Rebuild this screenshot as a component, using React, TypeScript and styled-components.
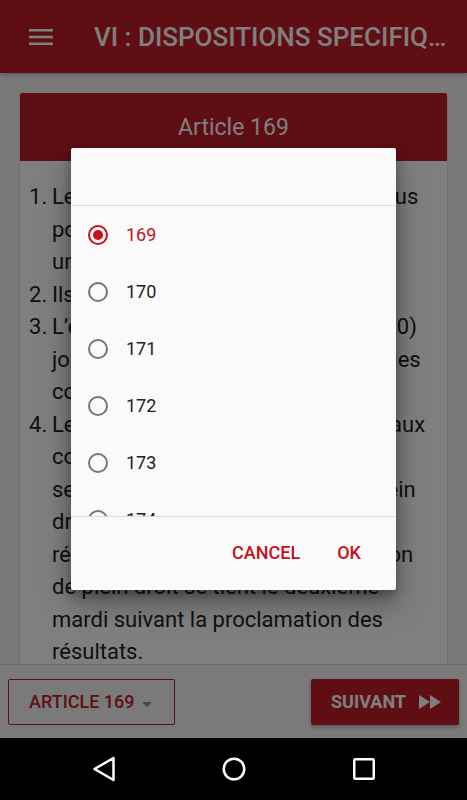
import React from "react";
import styled, {createGlobalStyle} from "styled-components";

const RED = "#be1c26";
const ACCENT = "#c8101a";

const articles = [169, 170, 171, 172, 173, 174, 175];

// corps de l'article, découpé ligne par ligne comme à l'écran
const paragraphs: string[][] = [
  [
    "Les députés de l’Assemblée sont élus",
    "pour cinq (5) ans au suffrage",
    "universel direct.",
  ],
  ["Ils sont rééligibles."],
  [
    "L’élection se tient au moins vingt (20)",
    "jours avant la fin des mandats que les",
    "conseillers en exercice.",
  ],
  [
    "Les résultats officiels des scrutins aux",
    "contestations électorales sont",
    "seconde session se réunit ici de plein",
    "droit à la date fixée par les",
    "résultats officiels du vote. La session",
    "de plein droit se tient le deuxième",
    "mardi suivant la proclamation des",
    "résultats.",
  ],
];

function App() {
  const selected = 169;
  return (
    <>
      <GlobalStyle />
      <Screen>
        <Main>
          <AppBar>
            <MenuIcon width="24" height="18" viewBox="0 0 24 18">
              <rect x="0" y="1" width="24" height="2.5" fill="#fff" />
              <rect x="0" y="7.75" width="24" height="2.5" fill="#fff" />
              <rect x="0" y="14.5" width="24" height="2.5" fill="#fff" />
            </MenuIcon>
            <Title>VI : DISPOSITIONS SPECIFIQUES AUX COLLECTIVITES</Title>
          </AppBar>
          <Content>
            <Card>
              <CardHeader>Article 169</CardHeader>
              <CardBody>
                {paragraphs.map((lines, i) => (
                  <Item key={i}>
                    <Num>{i + 1}.</Num>
                    <span>
                      {lines.map((line, j) => (
                        <React.Fragment key={j}>
                          {line}
                          {j < lines.length - 1 && <br />}
                        </React.Fragment>
                      ))}
                    </span>
                  </Item>
                ))}
              </CardBody>
            </Card>
          </Content>
          <BottomBar>
            <OutlineButton>
              ARTICLE 169
              <Caret />
            </OutlineButton>
            <NextButton>
              SUIVANT
              <svg width="22" height="14" viewBox="0 0 22 14">
                <path d="M0 0 L11 7 L0 14 Z M11 0 L22 7 L11 14 Z" fill="#fff" />
              </svg>
            </NextButton>
          </BottomBar>

          <Scrim>
            <Dialog>
              <DialogTitle />
              <OptionList>
                {articles.map((n) => (
                  <Option key={n}>
                    <Radio $checked={n === selected} />
                    <OptionLabel $checked={n === selected}>{n}</OptionLabel>
                  </Option>
                ))}
              </OptionList>
              <DialogActions>
                <TextButton>CANCEL</TextButton>
                <TextButton>OK</TextButton>
              </DialogActions>
            </Dialog>
          </Scrim>
        </Main>
        <NavBar>
          <NavSlot>
            <svg width="24" height="26" viewBox="0 0 24 26">
              <path
                d="M21.5 2 L2.5 13 L21.5 24 Z"
                fill="none"
                stroke="#fff"
                strokeWidth="2.5"
                strokeLinejoin="round"
              />
            </svg>
          </NavSlot>
          <NavSlot>
            <svg width="26" height="26" viewBox="0 0 26 26">
              <circle cx="13" cy="13" r="10.3" fill="none" stroke="#fff" strokeWidth="2.5" />
            </svg>
          </NavSlot>
          <NavSlot>
            <svg width="24" height="24" viewBox="0 0 24 24">
              <rect x="2.25" y="2.25" width="19.5" height="19.5" rx="1" fill="none" stroke="#fff" strokeWidth="2.5" />
            </svg>
          </NavSlot>
        </NavBar>
      </Screen>
    </>
  );
}

const GlobalStyle = createGlobalStyle`
  * {
    box-sizing: border-box;
  }
  html, body {
    margin: 0;
    padding: 0;
    background: #000;
  }
  body {
    font-family: Roboto, "Noto Sans", "Liberation Sans", sans-serif;
  }
`;
const Screen = styled.div`
  width: 467px;
  height: 800px;
  display: flex;
  flex-direction: column;
  overflow: hidden;
`;
const Main = styled.div`
  position: relative;
  flex: 1;
  display: flex;
  flex-direction: column;
  min-height: 0;
  background-color: #f3f3f3;
`;
const AppBar = styled.header`
  height: 73px;
  flex-shrink: 0;
  display: flex;
  align-items: center;
  padding: 0 14px 0 29px;
  background-color: ${RED};
  box-shadow: 0 2px 4px rgba(0, 0, 0, 0.25);
  z-index: 1;
`;
const MenuIcon = styled.svg`
  flex-shrink: 0;
`;
const Title = styled.h1`
  margin: 0 0 0 41px;
  color: #fff;
  font-size: 26px;
  font-weight: 500;
  white-space: nowrap;
  overflow: hidden;
  text-overflow: ellipsis;
`;
const Content = styled.div`
  flex: 1;
  min-height: 0;
  overflow: hidden;
  padding: 20px 20px 0;
`;
const Card = styled.article`
  background-color: #fff;
  border-radius: 2px;
  box-shadow: 0 1px 3px rgba(0, 0, 0, 0.2);
`;
const CardHeader = styled.h2`
  margin: 0;
  height: 68px;
  display: flex;
  align-items: center;
  justify-content: center;
  background-color: ${RED};
  border-radius: 2px 2px 0 0;
  color: #fff;
  font-size: 23px;
  font-weight: 400;
`;
const CardBody = styled.div`
  padding: 20px 20px 20px 9px;
  color: #212121;
  font-size: 22px;
  line-height: 32.5px;
  overflow: hidden;
`;
const Item = styled.div`
  display: grid;
  grid-template-columns: 23px 1fr;
  white-space: nowrap;
`;
const Num = styled.span``;
const BottomBar = styled.footer`
  height: 74px;
  flex-shrink: 0;
  display: flex;
  align-items: center;
  justify-content: space-between;
  padding: 0 8px;
  background-color: #f5f5f5;
  border-top: 1px solid #d6d6d6;
`;
const OutlineButton = styled.button`
  width: 167px;
  height: 46px;
  display: flex;
  align-items: center;
  gap: 7px;
  padding: 0 0 0 20px;
  background: transparent;
  border: 1px solid ${RED};
  border-radius: 2px;
  color: ${RED};
  font-family: inherit;
  font-size: 18px;
  font-weight: 500;
`;
const Caret = styled.span`
  width: 0;
  height: 0;
  margin-top: 6px;
  border-left: 5.5px solid transparent;
  border-right: 5.5px solid transparent;
  border-top: 5.5px solid #8f8f8f;
`;
const NextButton = styled.button`
  width: 148px;
  height: 46px;
  display: flex;
  align-items: center;
  gap: 13px;
  padding: 0 0 0 20px;
  background-color: ${RED};
  border: none;
  border-radius: 2px;
  color: #fff;
  font-family: inherit;
  font-size: 18px;
  font-weight: 700;
  box-shadow: 0 2px 4px rgba(0, 0, 0, 0.3);
`;
const Scrim = styled.div`
  position: absolute;
  inset: 0;
  z-index: 5;
  display: flex;
  align-items: center;
  justify-content: center;
  background-color: rgba(0, 0, 0, 0.5);
`;
const Dialog = styled.div`
  width: 325px;
  height: 442px;
  display: flex;
  flex-direction: column;
  background-color: #fafafa;
  border-radius: 2px;
  box-shadow: 0 12px 30px rgba(0, 0, 0, 0.35), 0 6px 10px rgba(0, 0, 0, 0.25);
`;
const DialogTitle = styled.div`
  height: 58px;
  flex-shrink: 0;
  border-bottom: 1px solid #dcdcdc;
`;
const OptionList = styled.div`
  flex: 1;
  min-height: 0;
  overflow: hidden;
`;
const Option = styled.label`
  height: 57px;
  display: flex;
  align-items: center;
  padding-left: 17px;
`;
const Radio = styled.span<{$checked: boolean}>`
  width: 20px;
  height: 20px;
  margin: 0 18px 0 0;
  border-radius: 50%;
  border: 2px solid ${(p) => (p.$checked ? ACCENT : "#757575")};
  display: flex;
  align-items: center;
  justify-content: center;
  &::after {
    content: "";
    width: 10px;
    height: 10px;
    border-radius: 50%;
    background-color: ${ACCENT};
    display: ${(p) => (p.$checked ? "block" : "none")};
  }
`;
const OptionLabel = styled.span<{$checked: boolean}>`
  color: ${(p) => (p.$checked ? ACCENT : "#212121")};
  font-size: 18px;
`;
const DialogActions = styled.div`
  height: 74px;
  flex-shrink: 0;
  display: flex;
  align-items: center;
  justify-content: flex-end;
  gap: 37px;
  padding: 0 35px 2px 0;
  border-top: 1px solid #dcdcdc;
`;
const TextButton = styled.button`
  padding: 0;
  background: none;
  border: none;
  color: ${ACCENT};
  font-family: inherit;
  font-size: 18px;
  font-weight: 500;
`;
const NavBar = styled.nav`
  height: 62px;
  flex-shrink: 0;
  display: flex;
  align-items: center;
  justify-content: center;
  background-color: #000;
`;
const NavSlot = styled.div`
  width: 130px;
  display: flex;
  justify-content: center;
`;

export default App;
